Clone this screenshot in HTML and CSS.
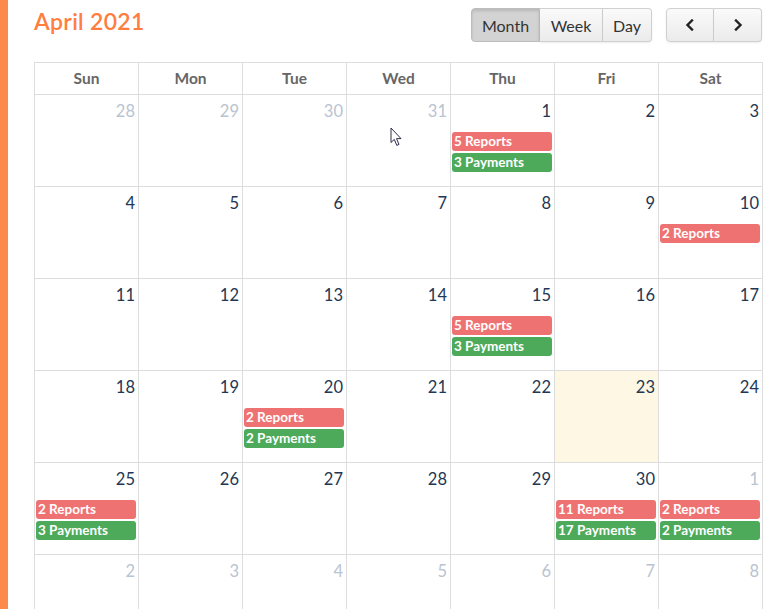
FILE: index.html
```html
<!DOCTYPE html>
<html lang="en">
<head>
    <meta charset="UTF-8">
    <meta name="viewport" content="width=device-width, initial-scale=1.0">
    <title>Calendar</title>
    <link rel="stylesheet" href="styles.css">
</head>
<body>
    <div class="page">
        <div class="accent"></div>
        <div class="main">
            <div class="toolbar">
                <h2 class="title">April 2021</h2>
                <div class="controls">
                    <div class="btn-group">
                        <button class="btn btn-month active">Month</button>
                        <button class="btn btn-week">Week</button>
                        <button class="btn btn-day">Day</button>
                    </div>
                    <div class="btn-group">
                        <button class="btn btn-arrow"><svg width="10" height="12" viewBox="0 0 10 12"><polyline points="7,1.5 2.5,6 7,10.5" /></svg></button>
                        <button class="btn btn-arrow"><svg width="10" height="12" viewBox="0 0 10 12"><polyline points="3,1.5 7.5,6 3,10.5" /></svg></button>
                    </div>
                </div>
            </div>

            <div class="calendar">
                <div class="dow">
                    <div class="dow-cell">Sun</div>
                    <div class="dow-cell">Mon</div>
                    <div class="dow-cell">Tue</div>
                    <div class="dow-cell">Wed</div>
                    <div class="dow-cell">Thu</div>
                    <div class="dow-cell">Fri</div>
                    <div class="dow-cell">Sat</div>
                </div>

                <div class="week">
                    <div class="day other"><div class="num">28</div></div>
                    <div class="day other"><div class="num">29</div></div>
                    <div class="day other"><div class="num">30</div></div>
                    <div class="day other"><div class="num">31</div></div>
                    <div class="day">
                        <div class="num">1</div>
                        <div class="event reports">5 Reports</div>
                        <div class="event payments">3 Payments</div>
                    </div>
                    <div class="day"><div class="num">2</div></div>
                    <div class="day"><div class="num">3</div></div>
                </div>

                <div class="week">
                    <div class="day"><div class="num">4</div></div>
                    <div class="day"><div class="num">5</div></div>
                    <div class="day"><div class="num">6</div></div>
                    <div class="day"><div class="num">7</div></div>
                    <div class="day"><div class="num">8</div></div>
                    <div class="day"><div class="num">9</div></div>
                    <div class="day">
                        <div class="num">10</div>
                        <div class="event reports">2 Reports</div>
                    </div>
                </div>

                <div class="week">
                    <div class="day"><div class="num">11</div></div>
                    <div class="day"><div class="num">12</div></div>
                    <div class="day"><div class="num">13</div></div>
                    <div class="day"><div class="num">14</div></div>
                    <div class="day">
                        <div class="num">15</div>
                        <div class="event reports">5 Reports</div>
                        <div class="event payments">3 Payments</div>
                    </div>
                    <div class="day"><div class="num">16</div></div>
                    <div class="day"><div class="num">17</div></div>
                </div>

                <div class="week">
                    <div class="day"><div class="num">18</div></div>
                    <div class="day"><div class="num">19</div></div>
                    <div class="day">
                        <div class="num">20</div>
                        <div class="event reports">2 Reports</div>
                        <div class="event payments">2 Payments</div>
                    </div>
                    <div class="day"><div class="num">21</div></div>
                    <div class="day"><div class="num">22</div></div>
                    <div class="day today"><div class="num">23</div></div>
                    <div class="day"><div class="num">24</div></div>
                </div>

                <div class="week">
                    <div class="day">
                        <div class="num">25</div>
                        <div class="event reports">2 Reports</div>
                        <div class="event payments">3 Payments</div>
                    </div>
                    <div class="day"><div class="num">26</div></div>
                    <div class="day"><div class="num">27</div></div>
                    <div class="day"><div class="num">28</div></div>
                    <div class="day"><div class="num">29</div></div>
                    <div class="day">
                        <div class="num">30</div>
                        <div class="event reports">11 Reports</div>
                        <div class="event payments">17 Payments</div>
                    </div>
                    <div class="day other">
                        <div class="num">1</div>
                        <div class="event reports">2 Reports</div>
                        <div class="event payments">2 Payments</div>
                    </div>
                </div>

                <div class="week">
                    <div class="day other"><div class="num">2</div></div>
                    <div class="day other"><div class="num">3</div></div>
                    <div class="day other"><div class="num">4</div></div>
                    <div class="day other"><div class="num">5</div></div>
                    <div class="day other"><div class="num">6</div></div>
                    <div class="day other"><div class="num">7</div></div>
                    <div class="day other"><div class="num">8</div></div>
                </div>

                <!-- mouse pointer from the screenshot -->
                <svg class="cursor" width="12" height="20" viewBox="0 0 12 20">
                    <path d="M1,1 L1,15.5 L4.3,12.4 L6.8,18.4 L9,17.4 L6.5,11.6 L11,11.6 Z" />
                </svg>
            </div>
        </div>
    </div>
</body>
</html>
```

FILE: styles.css
```css
body,h1,h2,h3{
    margin:0;
}
body{
    font-family:Lato,"Open Sans",sans-serif;
    background-color:#fff;
    color:#333;
}
.page{
    display:flex;
    min-height:100vh;
}
.accent{
    flex:0 0 8px;
    background-color:#fd8a4b;
}
.main{
    width:729px;
    padding:9px 0 0 26px;
}
/* toolbar */
.toolbar{
    display:flex;
    justify-content:space-between;
    align-items:flex-start;
    margin-bottom:20px;
}
.title{
    font-size:23px;
    line-height:24px;
    font-weight:600;
    letter-spacing:.3px;
    color:#ff7e3f;
}
.controls{
    display:flex;
    gap:14px;
    margin-top:-1px;
    margin-right:1px;
}
.btn-group{
    display:flex;
}
.btn{
    height:34px;
    margin:0;
    padding:0;
    border:1px solid #d0d0d0;
    border-left-width:0;
    background:linear-gradient(#fafafa,#ebebeb);
    box-shadow:0 1px 2px rgba(0,0,0,.08);
    font-family:inherit;
    font-size:16px;
    color:#333;
    cursor:pointer;
}
.btn:first-child{
    border-left-width:1px;
    border-radius:4px 0 0 4px;
}
.btn:last-child{
    border-radius:0 4px 4px 0;
}
.btn.active{
    background:#d3d3d3;
    border-color:#bdbdbd;
    box-shadow:inset 0 2px 3px rgba(0,0,0,.12);
}
.btn-month{
    width:69px;
}
.btn-week{
    width:63px;
}
.btn-day{
    width:49px;
}
.btn-arrow{
    width:48px;
    display:flex;
    align-items:center;
    justify-content:center;
}
.btn-arrow polyline{
    fill:none;
    stroke:#222;
    stroke-width:2.4;
    stroke-linecap:square;
}
/* calendar grid */
.calendar{
    position:relative;
    border-top:1px solid #ddd;
    border-left:1px solid #ddd;
}
.dow,.week{
    display:grid;
    grid-template-columns:repeat(7,104px);
}
.dow-cell{
    height:32px;
    line-height:31px;
    box-sizing:border-box;
    border-right:1px solid #ddd;
    border-bottom:1px solid #ddd;
    text-align:center;
    font-size:15.5px;
    font-weight:700;
    color:#666;
}
.day{
    height:92px;
    box-sizing:border-box;
    border-right:1px solid #ddd;
    border-bottom:1px solid #ddd;
    padding-top:6px;
}
.day.today{
    background-color:#fdf7e3;
}
.num{
    padding-right:3px;
    margin-bottom:11px;
    text-align:right;
    font-size:16.5px;
    line-height:20px;
    color:#243653;
}
.day.other .num{
    color:#b9c3d1;
}
.event{
    height:19px;
    line-height:18px;
    margin:0 2px 2px 1px;
    padding-left:2px;
    border-radius:3px;
    font-size:13.5px;
    font-weight:700;
    color:#fff;
    white-space:nowrap;
    overflow:hidden;
}
.event.reports{
    background-color:#ef7272;
}
.event.payments{
    background-color:#4eaa5b;
}
.cursor{
    position:absolute;
    left:355px;
    top:64px;
}
.cursor path{
    fill:#fff;
    stroke:#2e2c4c;
    stroke-width:1;
    stroke-linejoin:round;
}
```
